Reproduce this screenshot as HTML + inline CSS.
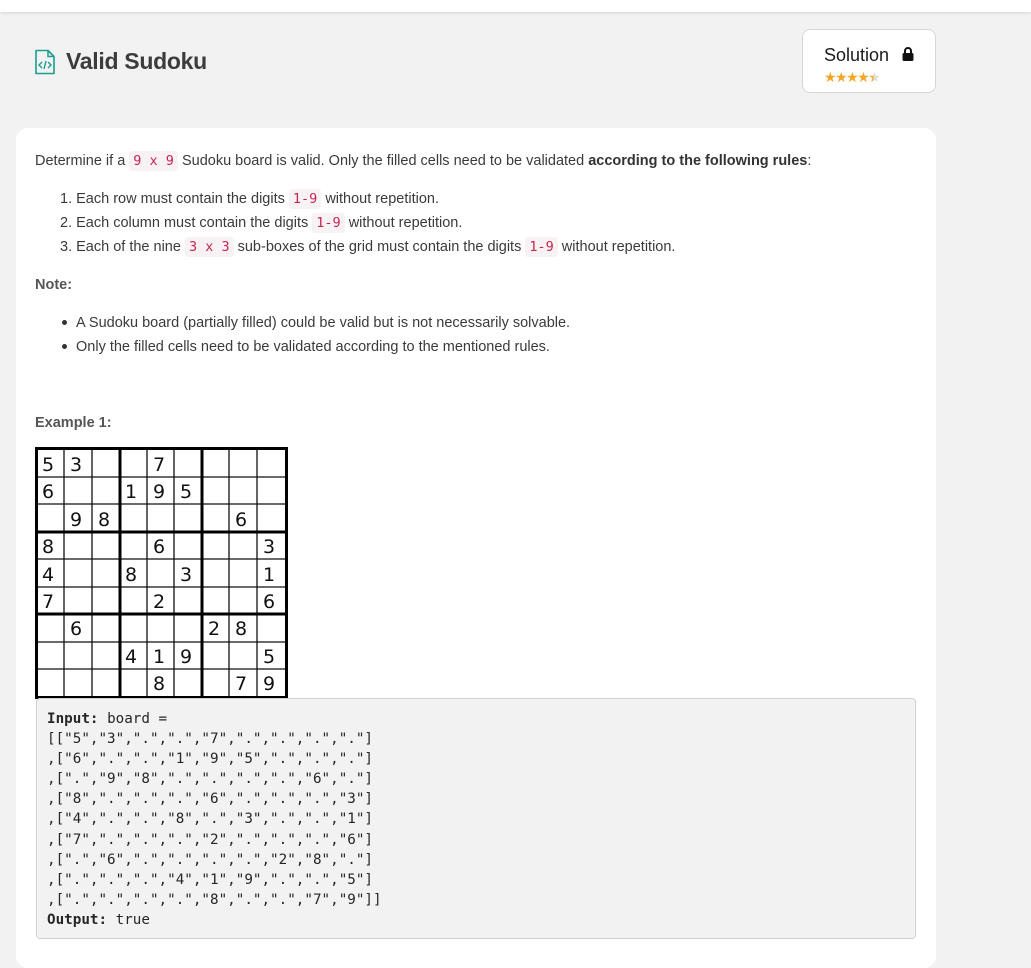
<!DOCTYPE html>
<html><head><meta charset="utf-8">
<style>
*{margin:0;padding:0;box-sizing:border-box}
body{width:1031px;height:957px;background:#f2f2f2;font-family:"Liberation Sans",sans-serif;color:#262626;position:relative;overflow:hidden}
.top{position:absolute;left:0;top:0;width:1031px;height:12px;background:#fff;box-shadow:0 1px 3px rgba(0,0,0,.12)}
.title{position:absolute;left:66px;top:48px;font-size:23px;font-weight:bold;color:#3c3c3c;letter-spacing:-0.3px}
.icon{position:absolute;left:34px;top:49px}
.sol{position:absolute;left:802px;top:29px;width:134px;height:64px;background:#fff;border:1px solid #d6d6d6;border-radius:8px}
.sol .t{position:absolute;left:21px;top:15px;font-size:18px;color:#1a1a1a}
.sol .lock{position:absolute;left:99px;top:17px}
.sol .stars{position:absolute;left:21px;top:40px;font-size:14px;color:#f5a623;letter-spacing:-1.5px;line-height:14px}
.card{position:absolute;left:16px;top:128px;width:920px;height:840px;background:#fff;border-radius:12px}
.p{position:absolute;font-size:14.5px;color:#3a3a3a;white-space:nowrap}
code{font-family:"DejaVu Sans Mono","Liberation Mono",monospace;font-size:13.5px;color:#c7254e;background:#f9f2f4;border-radius:3px;padding:2px 4px}
b{color:#333}
.bul{display:inline-block;width:5px;height:5px;border-radius:50%;background:#333;vertical-align:middle;margin-right:9px;position:relative;top:-1px}
.pre{position:absolute;left:36px;top:698px;width:880px;height:241px;background:#f2f2f2;border:1px solid #d0d0d0;border-radius:4px;padding:10px 10px;font-family:"DejaVu Sans Mono","Liberation Mono",monospace;font-size:14.25px;line-height:20.1px;color:#262626;white-space:pre}
</style></head><body>
<div class="top"></div>
<svg class="icon" width="22" height="26" viewBox="0 0 22 26"><path d="M2 1.5h12l6 6v17H2z" fill="none" stroke="#1a9e8f" stroke-width="1.6" stroke-linejoin="round"/><path d="M14 1.5v6h6" fill="none" stroke="#1a9e8f" stroke-width="1.5"/><path d="M8 13l-3 3 3 3M14 13l3 3-3 3M12 12l-2 8" fill="none" stroke="#1a9e8f" stroke-width="1.4"/></svg>
<div class="title">Valid Sudoku</div>
<div class="sol"><div class="t">Solution</div>
<svg class="lock" width="12" height="14" viewBox="0 0 12 14"><path d="M3 6V4a3 3 0 0 1 6 0v2" fill="none" stroke="#111" stroke-width="2"/><rect x="0.5" y="6" width="11" height="8" rx="1.5" fill="#111"/></svg>
<div class="stars">★★★★<span style="background:linear-gradient(90deg,#f5a623 50%,#ddd 50%);-webkit-background-clip:text;color:transparent">★</span></div></div>
<div class="card"></div>
<div class="p" style="left:35px;top:153px">Determine if a <code>9 x 9</code> Sudoku board is valid. Only the filled cells need to be validated <b>according to the following rules</b>:</div>
<div class="p" style="left:60px;top:191px">1. Each row must contain the digits <code>1-9</code> without repetition.</div>
<div class="p" style="left:60px;top:215px">2. Each column must contain the digits <code>1-9</code> without repetition.</div>
<div class="p" style="left:60px;top:239px">3. Each of the nine <code>3 x 3</code> sub-boxes of the grid must contain the digits <code>1-9</code> without repetition.</div>
<div class="p" style="left:35px;top:277px;font-weight:bold;color:#555">Note:</div>
<div class="p" style="left:62px;top:315px"><span class="bul"></span>A Sudoku board (partially filled) could be valid but is not necessarily solvable.</div>
<div class="p" style="left:62px;top:339px"><span class="bul"></span>Only the filled cells need to be validated according to the mentioned rules.</div>
<div class="p" style="left:35px;top:415px;font-weight:bold;color:#555">Example 1:</div>
<svg style="position:absolute;left:35px;top:447px" width="253" height="252" viewBox="0 0 253 252">
<rect width="253" height="252" fill="#fff"/>
<g stroke="#111" stroke-width="1.3">
<line x1="29" y1="0" x2="29" y2="252"/><line x1="57" y1="0" x2="57" y2="252"/>
<line x1="112" y1="0" x2="112" y2="252"/><line x1="139" y1="0" x2="139" y2="252"/>
<line x1="194" y1="0" x2="194" y2="252"/><line x1="222" y1="0" x2="222" y2="252"/>
<line x1="0" y1="30" x2="253" y2="30"/><line x1="0" y1="57" x2="253" y2="57"/>
<line x1="0" y1="112" x2="253" y2="112"/><line x1="0" y1="140" x2="253" y2="140"/>
<line x1="0" y1="195" x2="253" y2="195"/><line x1="0" y1="222" x2="253" y2="222"/>
</g>
<g stroke="#000" stroke-width="3" fill="none">
<rect x="1.5" y="1.5" width="250" height="249"/>
<line x1="85" y1="0" x2="85" y2="252"/><line x1="167" y1="0" x2="167" y2="252"/>
<line x1="0" y1="85" x2="253" y2="85"/><line x1="0" y1="167" x2="253" y2="167"/>
</g>
<g font-family="DejaVu Sans,sans-serif" font-size="19" fill="#111">
<text x="7" y="24">5</text><text x="35" y="24">3</text><text x="118" y="24">7</text>
<text x="7" y="51">6</text><text x="90" y="51">1</text><text x="118" y="51">9</text><text x="145" y="51">5</text>
<text x="35" y="79">9</text><text x="63" y="79">8</text><text x="200" y="79">6</text>
<text x="7" y="106">8</text><text x="118" y="106">6</text><text x="228" y="106">3</text>
<text x="7" y="134">4</text><text x="90" y="134">8</text><text x="145" y="134">3</text><text x="228" y="134">1</text>
<text x="7" y="161">7</text><text x="118" y="161">2</text><text x="228" y="161">6</text>
<text x="35" y="188">6</text><text x="173" y="188">2</text><text x="200" y="188">8</text>
<text x="90" y="216">4</text><text x="118" y="216">1</text><text x="145" y="216">9</text><text x="228" y="216">5</text>
<text x="118" y="243">8</text><text x="200" y="243">7</text><text x="228" y="243">9</text>
</g></svg>
<div class="pre"><b style="color:#262626">Input:</b> board = 
[["5","3",".",".","7",".",".",".","."]
,["6",".",".","1","9","5",".",".","."]
,[".","9","8",".",".",".",".","6","."]
,["8",".",".",".","6",".",".",".","3"]
,["4",".",".","8",".","3",".",".","1"]
,["7",".",".",".","2",".",".",".","6"]
,[".","6",".",".",".",".","2","8","."]
,[".",".",".","4","1","9",".",".","5"]
,[".",".",".",".","8",".",".","7","9"]]
<b style="color:#262626">Output:</b> true</div>
</body></html>
